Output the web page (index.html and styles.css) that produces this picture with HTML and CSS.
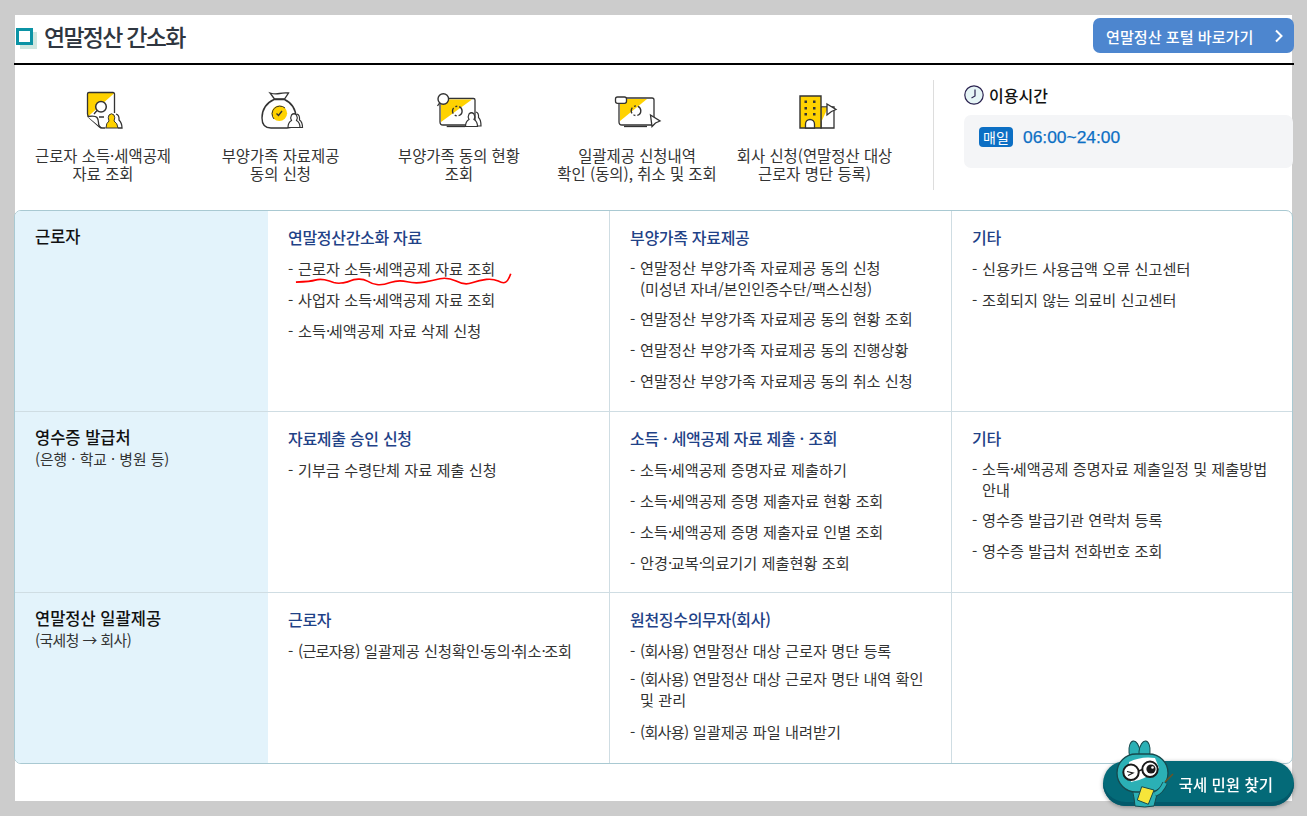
FILE: index.html
```html
<!DOCTYPE html>
<html lang="ko">
<head>
	<meta charset="UTF-8">
	<title>연말정산 간소화</title>
	<link rel="stylesheet" href="styles.css">
</head>
<body>
	<div class="page">
		<header class="head">
			<h1 class="title"><span class="title-mark"></span>연말정산 간소화</h1>
			<a href="#portal" class="portal">연말정산 포털 바로가기
				<svg width="10" height="14" viewBox="0 0 10 14"><path d="M2 1.500 7.500 7 2 12.500" fill="none" stroke="#fff" stroke-width="2"/></svg>
			</a>
		</header>

		<section class="quick">
			<ul class="quick-list">
				<li>
					<svg class="quick-icon" width="50" height="40" viewBox="0 0 50 40">
						<path d="M10 1.500h25q1.500 0 1.500 1.500v22L25 37.500 9.500 26V2z" fill="#fff"/>
						<path d="M9.500 2h27L9.500 26z" fill="#ffd200"/>
						<path d="M36.500 22V3q0-1.500-1.500-1.500H11q-1.500 0-1.500 1.500v20q0 2 2 4l10 9q1 1 3 1h3" fill="none" stroke="#333" stroke-width="1.300"/>
						<path d="M9.500 25.500q8-1 9.500 1t1.500 5q0 4 3 5.500" fill="#fff" stroke="#333" stroke-width="1.300"/>
						<circle cx="23" cy="15.700" r="5.300" fill="#fff" stroke="#333" stroke-width="1.500"/>
						<path d="M19 19.500l-3 3.500M21 26h5" stroke="#333" stroke-width="1.300"/>
						<path d="M38 23q3.500 1 3 6 3 3 3 8h-4" fill="#fff" stroke="#333" stroke-width="1.300"/>
						<path d="M28 37q0-5 3-7-1.500-3.500 0-6 2.500-2.500 5 0 1.500 2.500 0 6 3.500 2 4 7z" fill="#ffd200" stroke="#333" stroke-width="1"/>
					</svg>
					<p>근로자 소득·세액공제<br>자료 조회</p>
				</li>
				<li>
					<svg class="quick-icon" width="50" height="40" viewBox="0 0 50 40">
						<path d="M14 2q5 1.500 9.500.5t9-.5l-4 6h-10z" fill="#fff" stroke="#333" stroke-width="1.300"/>
						<path d="M18 8.500h10.500Q40 14 40 27q0 10-9 10H15Q6 37 6 27 6 14 18 8.500z" fill="#fff" stroke="#333" stroke-width="1.400"/>
						<circle cx="23.300" cy="22.300" r="7.800" fill="#ffd200"/>
						<path d="M18 28a7.800 7.800 0 0 1 11-11" fill="none" stroke="#333" stroke-width="1"/>
						<path d="M20.500 22.500l2 2 3.500-4.500" fill="none" stroke="#333" stroke-width="1.400"/>
						<path d="M41 23q3 1 2.500 6 3 2 3 7.500h-4" fill="#fff" stroke="#333" stroke-width="1.200"/>
						<path d="M32 36.500q0-5 3.500-7-1.500-3 0-5.500 2.500-2.500 5 0 1.500 2.500 0 5.500 3.500 2 3.500 7z" fill="#fff" stroke="#333" stroke-width="1.200"/>
					</svg>
					<p>부양가족 자료제공<br>동의 신청</p>
				</li>
				<li>
					<svg class="quick-icon" width="50" height="40" viewBox="0 0 50 40">
						<path d="M8 7.500h31.500q1.500 0 1.500 1.500v22q0 3-3 3H9q-3 0-3-3V8z" fill="#fff" stroke="#333" stroke-width="1.300"/>
						<path d="M7 8.500h31L7 31z" fill="#ffd200"/>
						<path d="M12.700 35.500H31" stroke="#333" stroke-width="1.300"/>
						<circle cx="9.300" cy="8" r="5.300" fill="#fff" stroke="#333" stroke-width="1.400"/>
						<path d="M5.500 12 3.500 15" stroke="#333" stroke-width="1.300"/>
						<circle cx="23.300" cy="20" r="4.800" fill="none" stroke="#333" stroke-width="1.400" stroke-dasharray="6 2 2 2"/>
						<path d="M42 21q3 1 2.500 5.500 2.500 2 2.500 8.500h-4" fill="#fff" stroke="#333" stroke-width="1.200"/>
						<path d="M31.500 35.500q0-5 3.500-7-1.500-3 0-5.500 2.500-2.500 5 0 1.500 2.500 0 5.500 3.500 2 3.500 7z" fill="#fff" stroke="#333" stroke-width="1.200"/>
					</svg>
					<p>부양가족 동의 현황<br>조회</p>
				</li>
				<li>
					<svg class="quick-icon" width="50" height="40" viewBox="0 0 50 40">
						<path d="M7 7h33q2 0 2 2v22q0 3-3 3H10q-3 0-3-3z" fill="#fff" stroke="#333" stroke-width="1.300"/>
						<path d="M8 8h27L8 30z" fill="#ffd200"/>
						<rect x="3.500" y="6" width="11" height="6.300" rx="2" fill="#fff" stroke="#333" stroke-width="1.300"/>
						<path d="M12 35.500h23" stroke="#333" stroke-width="1.300"/>
						<circle cx="24" cy="19.700" r="4.800" fill="none" stroke="#333" stroke-width="1.400" stroke-dasharray="6 2 2 2"/>
						<path d="M38.500 24l9.500 6-4.500 2-3.500 3.500z" fill="#fff" stroke="#333" stroke-width="1.300"/>
					</svg>
					<p>일괄제공 신청내역<br>확인 (동의), 취소 및 조회</p>
				</li>
				<li>
					<svg class="quick-icon" width="50" height="40" viewBox="0 0 50 40">
						<path d="M31 16h13v21H31z" fill="#fff" stroke="#333" stroke-width="1.300"/>
						<path d="M31.500 16.500h6.500l-6.500 14z" fill="#ffd200"/>
						<path d="M10 5h21v32H10z" fill="#ffd200" stroke="#333" stroke-width="1.400"/>
						<path d="M15.500 37v-4a4.500 4.500 0 0 1 9 0v4z" fill="#fff" stroke="#333" stroke-width="1.300"/>
						<g fill="#333">
							<rect x="14.500" y="9.500" width="2.500" height="2.500"/><rect x="23" y="9.500" width="2.500" height="2.500"/>
							<rect x="14.500" y="16" width="2.500" height="2.500"/><rect x="23" y="16" width="2.500" height="2.500"/>
							<rect x="14.500" y="22" width="2.500" height="2.500"/><rect x="23" y="22" width="2.500" height="2.500"/>
						</g>
						<path d="M37 13l9 5.500-4.500 2-4.500 3.500z" fill="#fff" stroke="#333" stroke-width="1.300"/>
					</svg>
					<p>회사 신청(연말정산 대상<br>근로자 명단 등록)</p>
				</li>
			</ul>
			<div class="hours">
				<h2 class="hours-title">
					<svg width="20" height="20" viewBox="0 0 20 20"><circle cx="10" cy="10" r="9.200" fill="#e6f5f6" stroke="#2b2350" stroke-width="1.200"/><path d="M11 4.500V11L7.500 13" fill="none" stroke="#2b2350" stroke-width="1.200"/></svg>
					이용시간
				</h2>
				<div class="hours-box"><span class="badge">매일</span><span class="time">06:00~24:00</span></div>
			</div>
		</section>

		<div class="menu">
			<div class="menu-row row-a">
				<div class="who"><strong>근로자</strong></div>
				<div class="col">
					<h3>연말정산간소화 자료</h3>
					<ul>
						<li class="marked">근로자 소득<span class="dot">·</span>세액공제 자료 조회
							<svg class="squiggle" width="219" height="16.200" viewBox="870 215 648 48"><path d="M875 245Q920 243 932 239 945 235 960 238 975 242 987 246 1000 250 1015 247 1030 245 1037 241 1045 237 1060 236 1075 235 1087 242 1100 250 1115 252 1130 255 1155 246 1180 238 1205 244 1230 250 1255 245 1280 240 1302 235 1325 230 1350 242 1375 255 1397 247 1420 240 1440 237 1460 235 1475 242 1490 250 1497 245 1505 240 1512 220" fill="none" stroke="#f00" stroke-width="5"/></svg>
						</li>
						<li>사업자 소득<span class="dot">·</span>세액공제 자료 조회</li>
						<li>소득<span class="dot">·</span>세액공제 자료 삭제 신청</li>
					</ul>
				</div>
				<div class="col">
					<h3>부양가족 자료제공</h3>
					<ul>
						<li class="tight">연말정산 부양가족 자료제공 동의 신청<br><span class="snug">(미성년 자녀/본인인증수단/팩스신청)</span></li>
						<li>연말정산 부양가족 자료제공 동의 현황 조회</li>
						<li>연말정산 부양가족 자료제공 동의 진행상황</li>
						<li>연말정산 부양가족 자료제공 동의 취소 신청</li>
					</ul>
				</div>
				<div class="col">
					<h3>기타</h3>
					<ul>
						<li>신용카드 사용금액 오류 신고센터</li>
						<li>조회되지 않는 의료비 신고센터</li>
					</ul>
				</div>
			</div>
			<div class="menu-row row-b">
				<div class="who"><strong>영수증 발급처</strong><span>(은행 · 학교 · 병원 등)</span></div>
				<div class="col">
					<h3>자료제출 승인 신청</h3>
					<ul>
						<li>기부금 수령단체 자료 제출 신청</li>
					</ul>
				</div>
				<div class="col">
					<h3>소득 · 세액공제 자료 제출 · 조회</h3>
					<ul>
						<li>소득<span class="dot">·</span>세액공제 증명자료 제출하기</li>
						<li>소득<span class="dot">·</span>세액공제 증명 제출자료 현황 조회</li>
						<li>소득<span class="dot">·</span>세액공제 증명 제출자료 인별 조회</li>
						<li>안경<span class="dot">·</span>교복<span class="dot">·</span>의료기기 제출현황 조회</li>
					</ul>
				</div>
				<div class="col">
					<h3>기타</h3>
					<ul>
						<li class="tight">소득<span class="dot">·</span>세액공제 증명자료 제출일정 및 제출방법<br>안내</li>
						<li>영수증 발급기관 연락처 등록</li>
						<li>영수증 발급처 전화번호 조회</li>
					</ul>
				</div>
			</div>
			<div class="menu-row row-c">
				<div class="who"><strong>연말정산 일괄제공</strong><span>(국세청 → 회사)</span></div>
				<div class="col">
					<h3>근로자</h3>
					<ul>
						<li><span class="paren">(근로자용)</span> 일괄제공 신청확인<span class="dot">·</span>동의<span class="dot">·</span>취소<span class="dot">·</span>조회</li>
					</ul>
				</div>
				<div class="col">
					<h3>원천징수의무자(회사)</h3>
					<ul>
						<li><span class="paren">(회사용)</span> 연말정산 대상 근로자 명단 등록</li>
						<li class="tight"><span class="paren">(회사용)</span> 연말정산 대상 근로자 명단 내역 확인<br>및 관리</li>
						<li><span class="paren">(회사용)</span> 일괄제공 파일 내려받기</li>
					</ul>
				</div>
				<div class="col"></div>
			</div>
		</div>
	</div>

	<a href="#find" class="find">
		<svg class="mascot" width="64" height="72" viewBox="0 0 64 72">
			<ellipse cx="21.500" cy="14" rx="5.500" ry="11" transform="rotate(-6 21.500 14)" fill="#2bb0b5" stroke="#17494d" stroke-width="1"/>
			<ellipse cx="31.500" cy="14" rx="5.500" ry="11" transform="rotate(6 31.500 14)" fill="#2bb0b5" stroke="#17494d" stroke-width="1"/>
			<path d="M21 60q-3-8 0-14h21q4 8 1 14l-2 8q-9 2-19 0z" fill="#2bb0b5" stroke="#17494d" stroke-width="1"/>
			<rect x="4" y="16" width="51" height="38" rx="19" fill="#2bb0b5" stroke="#17494d" stroke-width="1.300"/>
			<path d="M16 24q12-6 26-4l4 10q-14 12-28 14z" fill="#fff"/>
			<circle cx="18" cy="34.300" r="7.700" fill="#fff" stroke="#1a1a1a" stroke-width="2"/>
			<circle cx="37" cy="31.300" r="7.700" fill="#fff" stroke="#1a1a1a" stroke-width="2"/>
			<path d="M25.500 33l4-1.500" stroke="#1a1a1a" stroke-width="1.600"/>
			<circle cx="38" cy="31" r="4.600" fill="#1a1a1a"/>
			<circle cx="39.500" cy="29.500" r="1.300" fill="#fff"/>
			<path d="M14 33.500l6 1.500-5 2.500" fill="none" stroke="#1a1a1a" stroke-width="1.200"/>
			<path d="M52 44 60 36" stroke="#6a5526" stroke-width="1.600"/>
			<path d="M42 56q6-2 10-11" fill="none" stroke="#17494d" stroke-width="5.500"/>
			<path d="M42 56q6-2 10-11" fill="none" stroke="#2bb0b5" stroke-width="3.800"/>
			<path d="M28.700 48.700 41 52l-5.700 14.300L24.300 62z" fill="#f6e53a" stroke="#17494d" stroke-width="1"/>
		</svg>
		국세 민원 찾기
	</a>
</body>
</html>
```

FILE: styles.css
```css
* {
	box-sizing: border-box;
}

body {
	margin: 0;
	height: 816px;
	overflow: hidden;
	padding: 15px 15px 0;
	background: #cccccc;
	font-family: "Noto Sans CJK KR", "Noto Sans", sans-serif;
	font-size: 15.2px;
	color: #333333;
}

a {
	text-decoration: none;
}

ul {
	list-style: none;
	margin: 0;
	padding: 0;
}

p, h1, h2, h3 {
	margin: 0;
}

.page {
	width: 1277px;
	height: 786px;
	background: #ffffff;
}

/* header */
.head {
	display: flex;
	justify-content: space-between;
	align-items: flex-start;
	height: 50px;
	margin: 0 -2px 0 -1px;
	padding: 3px 0 0 1px;
	border-bottom: 2px solid #000000;
}

.title {
	display: flex;
	align-items: center;
	height: 35px;
	font-size: 23px;
	font-weight: 500;
	letter-spacing: -1.75px;
	color: #2f3640;
}

.title-mark {
	width: 17px;
	height: 17px;
	margin: 1px 11px 0 1px;
	border: 3px solid #0b93a5;
	box-shadow: 4px 4px 0 #cfe6e0;
	background: #ffffff;
}

.portal {
	display: flex;
	align-items: center;
	justify-content: space-between;
	width: 201px;
	height: 35px;
	padding: 0 10px 0 13px;
	border-radius: 7px;
	background: #4d86cf;
	color: #ffffff;
	font-size: 15.100px;
	font-weight: 500;
}

/* quick links */
.quick {
	display: flex;
	height: 145px;
}

.quick-list {
	display: grid;
	grid-template-columns: 176px 179px 178px 178px 177px;
	width: 919px;
	height: 110px;
	margin-top: 15px;
	padding-top: 11px;
	border-right: 1px solid #dddddd;
}

.quick-list li {
	display: flex;
	flex-direction: column;
	align-items: center;
	text-align: center;
	line-height: 18px;
	color: #333333;
}

.quick-icon {
	margin-bottom: 15px;
}

.quick-list p {
	font-size: 15.400px;
	white-space: nowrap;
}

.hours {
	flex: 1;
	margin: 20px -1px 0 0;
	padding-left: 30px;
}

.hours-title {
	display: flex;
	align-items: center;
	gap: 5px;
	height: 20px;
	font-size: 16px;
	font-weight: 500;
	color: #111111;
}

.hours-box {
	display: flex;
	align-items: flex-start;
	gap: 10px;
	height: 53px;
	margin-top: 10px;
	padding: 12px 15px;
	border-radius: 7px;
	background: #f4f5f7;
}

.badge {
	width: 34px;
	height: 20px;
	border-radius: 4px;
	background: #0c6fc4;
	color: #ffffff;
	font-size: 14px;
	line-height: 20px;
	text-align: center;
}

.time {
	font-family: "Liberation Sans", sans-serif;
	font-size: 17.400px;
	line-height: 20px;
	color: #0c6fc4;
	-webkit-text-stroke: .25px #0c6fc4;
}

/* main table */
.menu {
	margin: 0 -1px;
	height: 554px;
	border: 1px solid #a9c9d2;
	border-radius: 7px;
	overflow: hidden;
}

.menu-row {
	display: grid;
	grid-template-columns: 253px 341px 342px 1fr;
	border-bottom: 1px solid #cfdde3;
}

.menu-row:last-child {
	border-bottom: 0;
}

.row-a {
	height: 201px;
}

.row-b {
	height: 181px;
}

.row-c {
	height: 170px;
}

.row-a ul, .row-c ul {
	margin-top: 1px;
}

.who {
	padding: 13px 20px;
	background: #e3f3fb;
}

.who strong {
	display: block;
	font-size: 16.500px;
	font-weight: 500;
	line-height: 24px;
	color: #111111;
}

.who span {
	display: block;
	margin-top: 1px;
	font-size: 14.800px;
	line-height: 18px;
}

.row-c .who span {
	letter-spacing: -.5px;
}

.col {
	padding: 14px 20px 0;
	border-left: 1px solid #cfdde3;
}

.col:nth-child(2) {
	border-left: 0;
}

.col h3 {
	font-size: 16px;
	font-weight: 500;
	letter-spacing: -.3px;
	line-height: 24px;
	color: #1f4287;
	margin-bottom: 8px;
}

.col li {
	position: relative;
	padding-left: 10px;
	margin-bottom: 9px;
	line-height: 22px;
	white-space: nowrap;
}

.col li.tight {
	margin-bottom: 8px;
	line-height: 21px;
}

.row-c .col li {
	margin-bottom: 7px;
}

.row-c .col li.tight {
	margin-bottom: 10px;
}

.col li::before {
	content: "-";
	position: absolute;
	left: 0;
}

.dot {
	letter-spacing: -1.5px;
}

.paren {
	letter-spacing: -.75px;
}

.snug {
	letter-spacing: -.2px;
}

.marked .squiggle {
	position: absolute;
	left: 6px;
	top: 14.600px;
}

/* floating button */
.find {
	position: fixed;
	left: 1103px;
	top: 761px;
	display: flex;
	align-items: center;
	justify-content: flex-end;
	width: 191px;
	height: 45px;
	padding-right: 21px;
	border-radius: 23px;
	background: #046a78;
	box-shadow: inset 0 -4px 0 #03596a, 0 1px 4px rgba(0, 0, 0, .35);
	color: #ffffff;
	font-size: 15.500px;
	font-weight: 500;
}

.mascot {
	position: absolute;
	left: 10px;
	top: -23px;
}
```
